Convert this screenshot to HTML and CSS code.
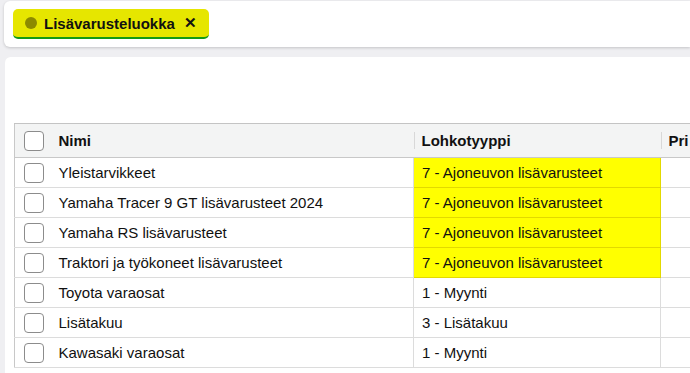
FILE: index.html
```html
<!DOCTYPE html>
<html lang="fi">
<head>
    <meta charset="UTF-8">
    <meta name="viewport" content="width=device-width, initial-scale=1.0">
    <title>Lisävarusteluokat</title>
    <link rel="stylesheet" href="styles.css">
</head>
<body>
    <div class="filter-card">
        <span class="chip">
            <span class="chip-dot"></span>
            <span class="chip-label">Lisävarusteluokka</span>
            <span class="chip-close">&#x2715;</span>
        </span>
    </div>

    <div class="list-card">
        <table class="grid">
            <colgroup>
                <col class="col-check">
                <col class="col-name">
                <col class="col-type">
                <col class="col-prio">
            </colgroup>
            <thead>
                <tr>
                    <th class="check"><span class="box"></span></th>
                    <th>Nimi</th>
                    <th class="sep">Lohkotyyppi</th>
                    <th class="sep">Pri</th>
                </tr>
            </thead>
            <tbody>
                <tr>
                    <td class="check"><span class="box"></span></td>
                    <td>Yleistarvikkeet</td>
                    <td class="hl">7 - Ajoneuvon lisävarusteet</td>
                    <td></td>
                </tr>
                <tr>
                    <td class="check"><span class="box"></span></td>
                    <td>Yamaha Tracer 9 GT lisävarusteet 2024</td>
                    <td class="hl">7 - Ajoneuvon lisävarusteet</td>
                    <td></td>
                </tr>
                <tr>
                    <td class="check"><span class="box"></span></td>
                    <td>Yamaha RS lisävarusteet</td>
                    <td class="hl">7 - Ajoneuvon lisävarusteet</td>
                    <td></td>
                </tr>
                <tr>
                    <td class="check"><span class="box"></span></td>
                    <td>Traktori ja työkoneet lisävarusteet</td>
                    <td class="hl">7 - Ajoneuvon lisävarusteet</td>
                    <td></td>
                </tr>
                <tr>
                    <td class="check"><span class="box"></span></td>
                    <td>Toyota varaosat</td>
                    <td>1 - Myynti</td>
                    <td></td>
                </tr>
                <tr>
                    <td class="check"><span class="box"></span></td>
                    <td>Lisätakuu</td>
                    <td>3 - Lisätakuu</td>
                    <td></td>
                </tr>
                <tr>
                    <td class="check"><span class="box"></span></td>
                    <td>Kawasaki varaosat</td>
                    <td>1 - Myynti</td>
                    <td></td>
                </tr>
            </tbody>
        </table>
    </div>
</body>
</html>
```

FILE: styles.css
```css
body {
    margin: 0;
    background-color: #efeff2;
    font-family: "Liberation Sans", Arial, sans-serif;
    color: #111;
    overflow: hidden;
}

.filter-card {
    margin: 1px 0 0 4px;
    height: 46px;
    padding: 8px 0 0 9px;
    box-sizing: border-box;
    background-color: #fff;
    border-radius: 6px 0 0 6px;
    box-shadow: 0 1px 3px rgba(0, 0, 0, 0.18);
}

.chip {
    display: inline-flex;
    align-items: center;
    height: 28px;
    padding: 0 12px 0 12px;
    background-color: #e6e600;
    border-bottom: 2px solid #149a14;
    border-radius: 5px;
    font-size: 15px;
    font-weight: bold;
    color: #111;
}

.chip-dot {
    width: 12px;
    height: 12px;
    border-radius: 50%;
    background-color: #8c8a00;
    margin-right: 7px;
}

.chip-close {
    margin-left: 9px;
    font-size: 15px;
}

.list-card {
    margin: 10px 0 0 4px;
    height: 340px;
    padding: 66px 0 0 10px;
    box-sizing: border-box;
    background-color: #fff;
    border-radius: 6px 0 0 6px;
    border-left: 1px solid transparent;
    background-clip: padding-box;
}

.grid {
    border-collapse: collapse;
    table-layout: fixed;
    width: 680px;
    margin-left: -1px;
    font-size: 15px;
}

.col-check { width: 36px; }
.col-name { width: 363px; }
.col-type { width: 247px; }
.col-prio { width: 34px; }

.grid th, .grid td {
    height: 29px;
    padding: 0 0 0 8px;
    text-align: left;
    white-space: nowrap;
    overflow: hidden;
    border-bottom: 1px solid #dcdcdc;
}

.grid thead th {
    height: 33px;
    background-color: #f3f4f4;
    font-weight: bold;
    border-top: 1px solid #c4c4c4;
    border-bottom: 1px solid #c8c8c8;
    position: relative;
}

.grid thead th.sep::before {
    content: "";
    position: absolute;
    left: 0;
    top: 8px;
    bottom: 8px;
    border-left: 1px solid #d8d8d8;
}

.grid tr > :first-child {
    border-left: 1px solid #c8c8c8;
}

.grid tbody td:nth-child(3),
.grid tbody td:nth-child(4) {
    border-left: 1px solid #dcdcdc;
}

.grid th.check, .grid td.check {
    padding-left: 9px;
}

.box {
    display: block;
    width: 18px;
    height: 18px;
    border: 1px solid #8c8c8c;
    border-radius: 4px;
    background-color: #fff;
}

.grid td.hl {
    background-color: #ffff00;
    border: 1px solid #e2d900;
}
```
